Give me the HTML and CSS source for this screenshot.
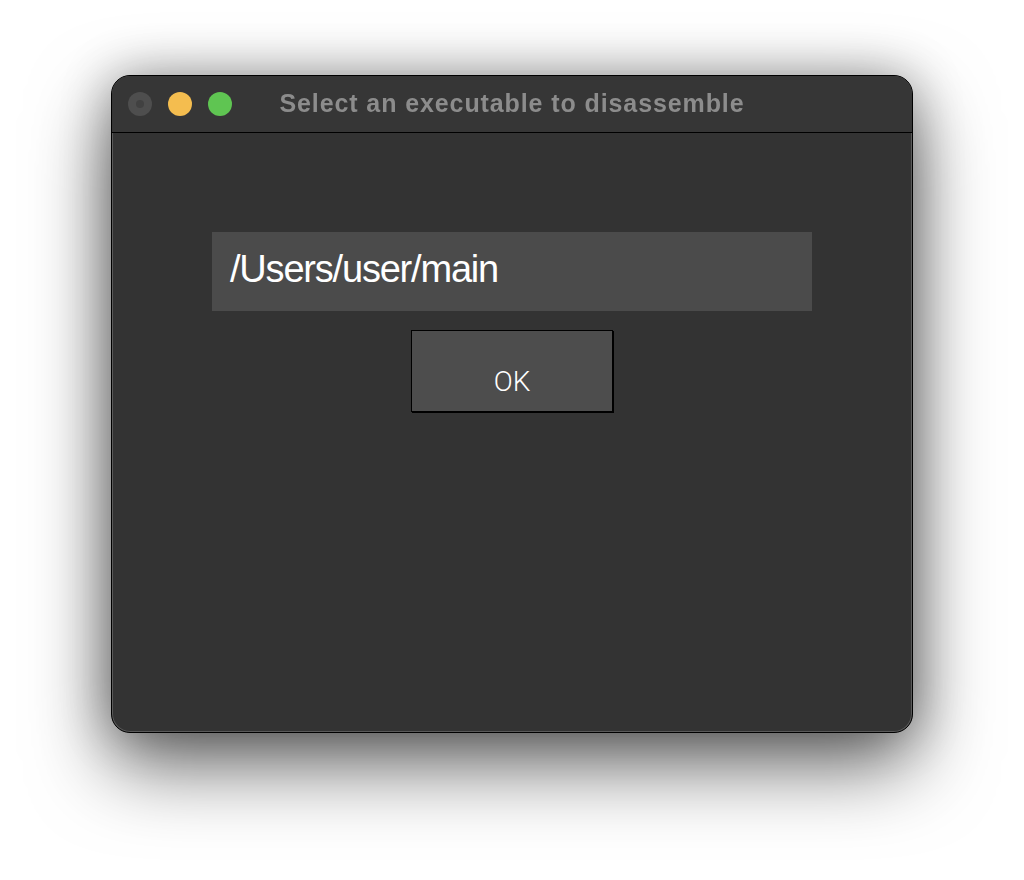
FILE: index.html
```html
<!DOCTYPE html>
<html>
<head>
<meta charset="utf-8">
<link rel="stylesheet" href="styles.css">
</head>
<body>
<div class="stage">
  <div class="window">
    <div class="titlebar">
      <div class="lights">
        <span class="light close"><span class="dot"></span></span>
        <span class="light min"></span>
        <span class="light max"></span>
      </div>
      <div class="title">Select an executable to disassemble</div>
    </div>
    <div class="content">
      <div class="field">/Users/user/main</div>
      <div class="button">OK</div>
    </div>
  </div>
</div>
</body>
</html>
```
FILE: styles.css
```css
html, body {
  margin: 0;
  padding: 0;
  background: #ffffff;
}
.stage {
  width: 1024px;
  height: 880px;
  padding: 75px 0 0 111px;
  box-sizing: border-box;
}
.window {
  width: 802px;
  height: 658px;
  box-sizing: border-box;
  background: #333333;
  border: 1px solid #000;
  border-radius: 19px;
  box-shadow: inset 0 0 0 1px #5a5a5a, 0 32px 80px rgba(0,0,0,0.6), 0 0 50px rgba(0,0,0,0.3);
  display: flex;
  flex-direction: column;
  overflow: hidden;
}
.titlebar {
  height: 57px;
  flex: none;
  box-sizing: border-box;
  border-bottom: 1px solid #000;
  background: #363636;
  display: flex;
  align-items: center;
  justify-content: center;
  position: relative;
}
.lights {
  position: absolute;
  left: 16px;
  top: 16px;
  display: flex;
  gap: 16px;
}
.light {
  width: 24px;
  height: 24px;
  border-radius: 50%;
  display: flex;
  align-items: center;
  justify-content: center;
}
.close { background: #4e4e4e; }
.close .dot { width: 8px; height: 8px; border-radius: 50%; background: #414141; }
.min { background: #f4bd4f; }
.max { background: #5fc552; }
.title {
  font-family: "Liberation Sans", Arial, sans-serif;
  font-weight: bold;
  font-size: 25px;
  letter-spacing: 0.9px;
  color: #8c8c8c;
  margin-top: -1px;
  filter: blur(0.6px);
}
.content {
  flex: 1;
  display: flex;
  flex-direction: column;
  align-items: center;
  padding-top: 99px;
}
.field {
  width: 600px;
  height: 79px;
  box-sizing: border-box;
  background: #4b4b4b;
  color: #ffffff;
  font-family: "Liberation Sans", Arial, sans-serif;
  font-size: 38px;
  letter-spacing: -1.2px;
  padding-left: 18px;
  display: flex;
  align-items: center;
  padding-bottom: 4px;
}
.button {
  margin-top: 19px;
  width: 202px;
  height: 82px;
  box-sizing: border-box;
  background: #4d4d4d;
  border: 1px solid #000;
  box-shadow: 1px 1px 0 #000;
  color: #ffffff;
  font-family: Roboto, sans-serif;
  font-weight: 300;
  font-size: 28px;
  display: flex;
  align-items: center;
  justify-content: center;
  padding-top: 20px;
}
```
